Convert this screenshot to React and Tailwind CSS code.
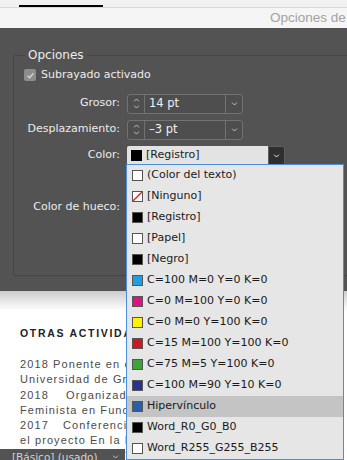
import React from 'react';

const swatchItems = [
  { label: '(Color del texto)', sw: 'bg-white' },
  { label: '[Ninguno]', sw: 'none' },
  { label: '[Registro]', sw: 'bg-black' },
  { label: '[Papel]', sw: 'bg-white' },
  { label: '[Negro]', sw: 'bg-black' },
  { label: 'C=100 M=0 Y=0 K=0', sw: 'bg-[#1f9fe0]' },
  { label: 'C=0 M=100 Y=0 K=0', sw: 'bg-[#df1380]' },
  { label: 'C=0 M=0 Y=100 K=0', sw: 'bg-[#fff200]' },
  { label: 'C=15 M=100 Y=100 K=0', sw: 'bg-[#c81a1f]' },
  { label: 'C=75 M=5 Y=100 K=0', sw: 'bg-[#3da538]' },
  { label: 'C=100 M=90 Y=10 K=0', sw: 'bg-[#29338a]' },
  { label: 'Hipervínculo', sw: 'bg-[#2b5ea8]', active: true },
  { label: 'Word_R0_G0_B0', sw: 'bg-black' },
  { label: 'Word_R255_G255_B255', sw: 'bg-white' },
];

function Chevron({ className = '', up = false }) {
  return (
    <svg viewBox="0 0 8 5" className={className} fill="none" stroke="currentColor" strokeWidth="1.1">
      {up ? <path d="M1 4.2 4 1.2 7 4.2" /> : <path d="M1 0.8 4 3.8 7 0.8" />}
    </svg>
  );
}

function Stepper({ value }) {
  return (
    <div className="flex h-[20px] w-[116px] rounded-[3px] border border-[#727272] bg-[#4e4e4e] text-[#f0f0f0]">
      <div className="flex w-[17px] flex-col items-center justify-center gap-[3px] border-r border-[#727272] text-[#cfcfcf]">
        <Chevron up className="h-[4px] w-[7px]" />
        <Chevron className="h-[4px] w-[7px]" />
      </div>
      <div className="flex flex-1 items-center pl-[4px] text-[11.5px]">{value}</div>
      <div className="flex w-[17px] items-center justify-center border-l border-[#727272] text-[#cfcfcf]">
        <Chevron className="h-[4px] w-[7px]" />
      </div>
    </div>
  );
}

function Swatch({ sw }) {
  if (sw === 'none') {
    return (
      <svg viewBox="0 0 11 11" className="h-[11px] w-[11px] shrink-0">
        <rect x="0.5" y="0.5" width="10" height="10" fill="#fff" stroke="#555" />
        <path d="M1.2 9.8 9.8 1.2" stroke="#e0201c" strokeWidth="1.4" />
      </svg>
    );
  }
  return <span className={`h-[11px] w-[11px] shrink-0 border border-[#555] ${sw}`} />;
}

export default function App() {
  return (
    <div className="relative h-[460px] w-[347px] overflow-hidden bg-white font-['DejaVu_Sans',sans-serif]">
      {/* page behind */}
      <div className="h-[7px] bg-[#f1f1f1] pt-[5px]">
        <div className="ml-[19px] h-[1.5px] w-[84px] bg-black" />
      </div>

      {/* title bar */}
      <div className="flex h-[21px] items-center overflow-hidden whitespace-nowrap border-t border-[#d9d9d9] bg-[#f5f5f5] pl-[270px] font-['Liberation_Sans',sans-serif] text-[13.5px] text-[#a3a3a3]">
        Opciones de subrayado
      </div>

      {/* dialog body */}
      <div className="h-[263px] bg-[#535353] pt-[21px] text-[11px] text-[#ececec]">
        <fieldset className="ml-[13px] h-[227px] w-[400px] rounded-[2px] border border-[#464646] pt-[6px]">
          <legend className="ml-[11px] px-[3px] text-[12px] leading-[12px]">Opciones</legend>

          <div className="flex items-center gap-[5px] pl-[10px]">
            <span className="flex h-[12px] w-[12px] items-center justify-center rounded-[2px] bg-[#8d8d8d]">
              <svg viewBox="0 0 10 10" className="h-[9px] w-[9px]" fill="none" stroke="#d4d4d4" strokeWidth="1.6">
                <path d="M1.8 5.2 4 7.4 8.3 2.4" />
              </svg>
            </span>
            <span>Subrayado activado</span>
          </div>

          <div className="mt-[10px] grid grid-cols-[106px_auto] items-center gap-x-[7px] gap-y-[6px]">
            <span className="text-right">Grosor:</span>
            <Stepper value="14 pt" />

            <span className="text-right">Desplazamiento:</span>
            <Stepper value="–3 pt" />

            <span className="text-right">Color:</span>
            <div className="flex h-[20px] w-[158px]">
              <div className="flex flex-1 items-center gap-[4px] rounded-l-[2px] bg-[#e3e3e3] pl-[4px] text-[#1b1b1b]">
                <span className="h-[11px] w-[11px] bg-black" />
                <span>[Registro]</span>
              </div>
              <div className="flex w-[17px] items-center justify-center rounded-r-[3px] border border-[#5e5e5e] bg-[#2f2f2f] text-white">
                <Chevron className="h-[4px] w-[7px]" />
              </div>
            </div>

            <span className="h-[20px]" />
            <span className="h-[20px]" />

            <span className="text-right">Color de hueco:</span>
            <span className="h-[20px]" />
          </div>
        </fieldset>
      </div>

      {/* shadow under dialog */}
      <div className="h-[20px] bg-gradient-to-b from-[#cdcdcd] to-white" />

      {/* page content, mostly hidden by the menu */}
      <div className="w-[127px] overflow-hidden pl-[20px] font-['Liberation_Sans',sans-serif] text-[#4b4b4b]">
        <div className="mt-[16px] whitespace-nowrap text-[10.5px] font-bold leading-[13px] tracking-[1.7px] text-[#222]">
          OTRAS ACTIVIDADES
        </div>
        <div className="mt-[17px] whitespace-nowrap text-[11px] leading-[15.3px] tracking-[1.1px]">
          <div>2018 Ponente en el Congreso</div>
          <div>Universidad de Granada</div>
          <div className="[word-spacing:13px]">2018 Organizadora</div>
          <div>Feminista en Fundación</div>
          <div className="[word-spacing:10px]">2017 Conferencia</div>
          <div>el proyecto En la Frontera</div>
          <div>Fundación Valentín</div>
        </div>
      </div>

      {/* panel at bottom */}
      <div className="absolute left-0 top-[449px] flex h-[20px] w-[125px] items-start justify-between bg-[#535353] pl-[12px] pr-[6px] pt-[1px] text-[10.5px] text-[#d2d2d2]">
        <span>[Básico] (usado)</span>
        <Chevron className="mt-[5px] h-[4px] w-[7px]" />
      </div>

      {/* open colour menu */}
      <div className="absolute left-[126px] top-[164px] w-[218px] border border-[#4a8fd9] bg-[#e6e6e6] text-[11px] text-[#1a1a1a]">
        {swatchItems.map((it) => (
          <div
            key={it.label}
            className={`flex h-[21px] items-center gap-[4px] pl-[5px] ${it.active ? 'bg-[#c4c4c4]' : ''}`}
          >
            <Swatch sw={it.sw} />
            <span className="whitespace-nowrap">{it.label}</span>
          </div>
        ))}
      </div>
    </div>
  );
}
